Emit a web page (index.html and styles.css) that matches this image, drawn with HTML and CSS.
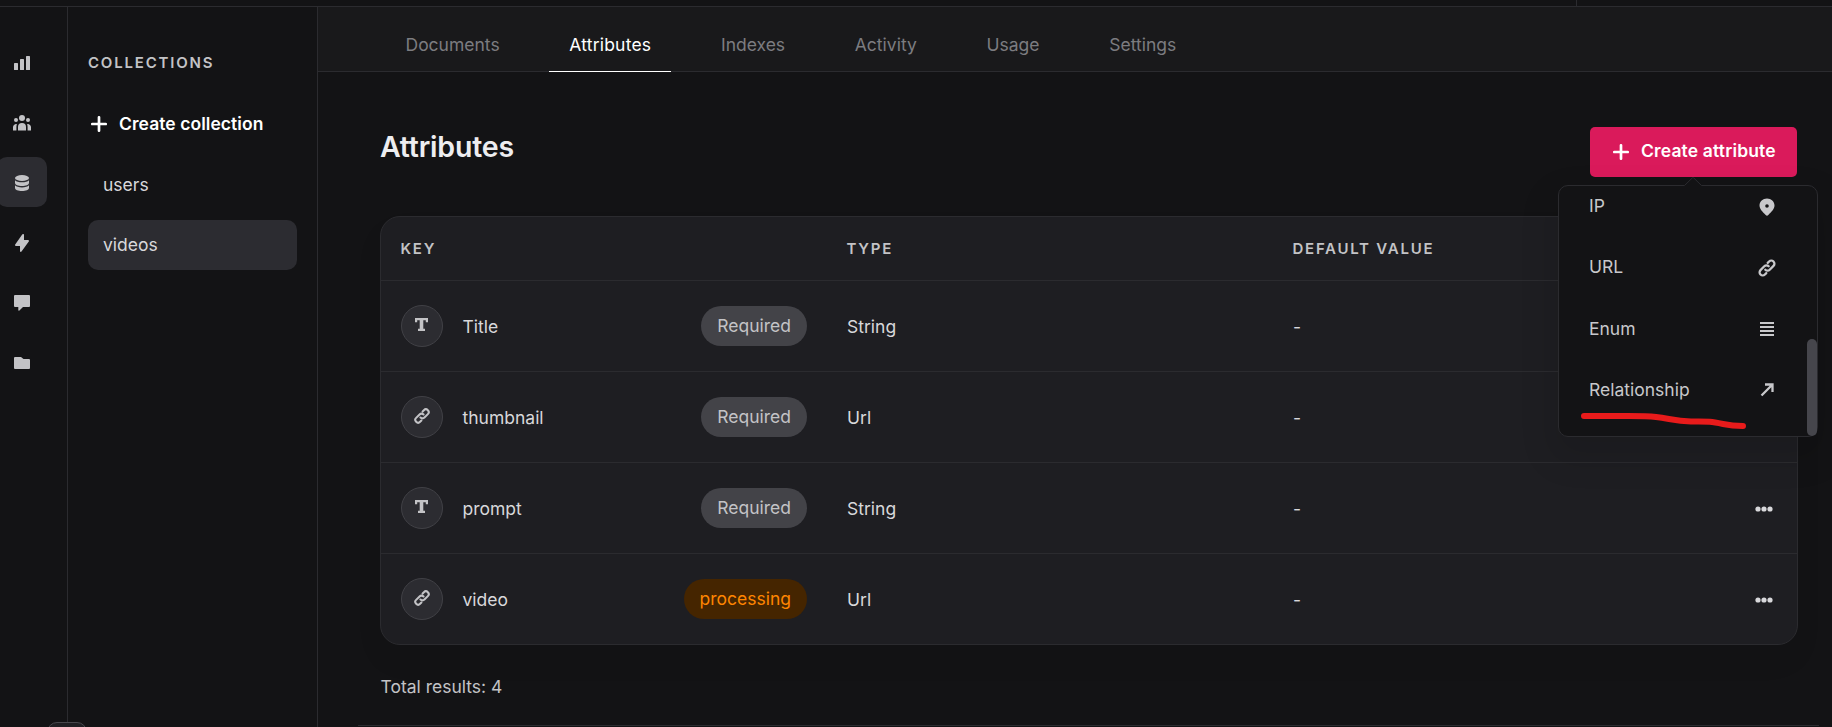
FILE: index.html
```html
<!DOCTYPE html>
<html lang="en">
<head>
<meta charset="utf-8">
<title>Attributes</title>
<link rel="stylesheet" href="styles.css">
</head>
<body>
<svg class="defs" width="0" height="0" aria-hidden="true">
  <symbol id="link" viewBox="0 0 20 20">
    <path d="M8.3 11.7a3.1 3.1 0 0 0 4.4 0l3.8-3.8a3.1 3.1 0 0 0-4.4-4.4l-1.4 1.4M11.7 8.300a3.1 3.1 0 0 0-4.4 0l-3.800 3.800a3.1 3.1 0 0 0 4.400 4.400l1.400-1.400" fill="none" stroke="currentColor" stroke-width="2.3" stroke-linecap="round"/>
  </symbol>
  <symbol id="serif-t" viewBox="0 0 13 13">
    <path d="M0 0h13v4.200h-2.200V2.300H8.300v8.400H10V13H3v-2.300h1.700V2.300H2.200v1.900H0z" fill="currentColor"/>
  </symbol>
  <symbol id="plus" viewBox="0 0 16 16">
    <path d="M8 1.300v13.400M1.300 8h13.400" stroke="currentColor" stroke-width="2.700" stroke-linecap="round"/>
  </symbol>
  <symbol id="dots" viewBox="0 0 18 6">
    <g fill="currentColor"><circle cx="3" cy="3" r="2.600"/><circle cx="9" cy="3" r="2.600"/><circle cx="15" cy="3" r="2.600"/></g>
  </symbol>
</svg>

<header class="topbar"><div class="topbar-end"></div></header>
<div class="app">
  <nav class="rail">
    <a class="rail-item"><svg width="18" height="16" viewBox="0 0 18 16"><g fill="currentColor"><rect x="1" y="8" width="4" height="7" rx=".6"/><rect x="7" y="4" width="4" height="11" rx=".6"/><rect x="13" y="1" width="4" height="14" rx=".6"/></g></svg></a>
    <a class="rail-item"><svg width="18" height="16" viewBox="0 0 18 16"><g fill="currentColor"><circle cx="9" cy="3" r="3"/><circle cx="3" cy="5" r="2"/><circle cx="15" cy="5" r="2"/><path d="M5 15.500V12a4 4 0 0 1 8 0v3.500zM0 15.500V12a3 3 0 0 1 4-2.700 6 6 0 0 0-.6 2.700v3.500zM18 15.500V12a3 3 0 0 0-4-2.700 6 6 0 0 1 .6 2.700v3.500z"/></g></svg></a>
    <a class="rail-item active"><svg width="16" height="18" viewBox="0 0 16 18"><g fill="currentColor"><ellipse cx="8" cy="4" rx="7" ry="3"/><path d="M1 6.200c1.200 1.300 3.900 2.100 7 2.100s5.800-.8 7-2.100V9c0 1.700-3.100 3-7 3s-7-1.300-7-3z"/><path d="M1 11.300c1.200 1.300 3.900 2.100 7 2.100s5.800-.8 7-2.100V14c0 1.700-3.100 3-7 3s-7-1.300-7-3z"/></g></svg></a>
    <a class="rail-item"><svg width="16" height="20" viewBox="0 0 16 20"><path d="M9 1c.7 0 1 .4 1 1v5h4c.9 0 1.300.8.8 1.500l-7.300 10c-.6.800-1.500.4-1.500-.5v-5H2c-.9 0-1.300-.8-.8-1.500l7-10c.2-.3.500-.5.8-.5z" fill="currentColor"/></svg></a>
    <a class="rail-item"><svg width="18" height="18" viewBox="0 0 18 18"><path d="M2 1h14a1 1 0 0 1 1 1v10a1 1 0 0 1-1 1h-6l-3.600 3.500c-.5.500-1.100.3-1.100-.4V13H2a1 1 0 0 1-1-1V2a1 1 0 0 1 1-1z" fill="currentColor"/></svg></a>
    <a class="rail-item"><svg width="18" height="14" viewBox="0 0 18 14"><path d="M2 1h6l2.500 2H16a1 1 0 0 1 1 1v8a1 1 0 0 1-1 1H2a1 1 0 0 1-1-1V2a1 1 0 0 1 1-1z" fill="currentColor"/></svg></a>
    <div class="rail-toggle"></div>
  </nav>
  <aside class="side">
    <h2 class="side-title">COLLECTIONS</h2>
    <a class="create"><svg width="16" height="16"><use href="#plus"/></svg>Create collection</a>
    <a class="side-item">users</a>
    <a class="side-item active">videos</a>
  </aside>
  <main class="main">
    <nav class="tabs">
      <a class="tab">Documents</a><a class="tab active">Attributes</a><a class="tab">Indexes</a><a class="tab">Activity</a><a class="tab">Usage</a><a class="tab">Settings</a>
    </nav>
    <div class="content">
      <div class="heading">
        <h1 class="title">Attributes</h1>
        <div class="action">
          <button class="button"><svg width="16" height="16"><use href="#plus"/></svg><span>Create attribute</span></button>
          <div class="menu">
            <svg class="menu-arrow" width="18" height="10" viewBox="0 0 18 10"><path d="M0 9 8 1q1-1 2 0l8 8v1H0z" fill="#131315"/><path d="M.5 8.500 8.300.9q.7-.6 1.400 0l7.800 7.600" fill="none" stroke="#2b2b2f"/></svg>
            <div class="menu-item">IP<span class="icon low"><svg width="18" height="18" viewBox="0 0 18 18"><path fill-rule="evenodd" d="M9 .5c4.200 0 7.500 3 7.500 7.100 0 3.500-3.200 6.500-6.200 9.500-.8.800-1.800.8-2.600 0-3-3-6.200-6-6.200-9.500C1.500 3.500 4.800.5 9 .5zM9 6.200a1.800 1.800 0 1 0 0 3.600 1.800 1.800 0 0 0 0-3.600z" fill="currentColor"/></svg></span></div>
            <div class="menu-item">URL<span class="icon low"><svg width="20" height="20"><use href="#link"/></svg></span></div>
            <div class="menu-item">Enum<span class="icon"><svg width="16" height="16" viewBox="0 0 16 16"><path d="M1 2h14M1 6h14M1 10h14M1 14h14" stroke="currentColor" stroke-width="2"/></svg></span></div>
            <div class="menu-item">Relationship<span class="icon"><svg width="16" height="16" viewBox="0 0 16 16"><path d="M2.500 13.500 13 3M6 2.500h7.500V10" fill="none" stroke="currentColor" stroke-width="2.300"/></svg></span></div>
            <div class="scroll-thumb"></div>
            <svg class="marker" width="172" height="24" viewBox="0 0 172 24"><path d="M6 7H50C62 7 70 7 78 8c15 2 20 4 35 4.500 17-.5 22 .5 32 2.500 7 1.500 12 2 20 2" fill="none" stroke="#e81b1b" stroke-width="6" stroke-linecap="round"/></svg>
          </div>
        </div>
      </div>
      <div class="table">
        <div class="row head"><span>KEY</span><span>TYPE</span><span>DEFAULT VALUE</span></div>
        <div class="row"><div class="key"><i class="avatar"><svg width="13" height="13"><use href="#serif-t"/></svg></i><span>Title</span><b class="tag">Required</b></div><span>String</span><span>-</span></div>
        <div class="row"><div class="key"><i class="avatar"><svg width="18" height="18"><use href="#link"/></svg></i><span>thumbnail</span><b class="tag">Required</b></div><span>Url</span><span>-</span></div>
        <div class="row"><div class="key"><i class="avatar"><svg width="13" height="13"><use href="#serif-t"/></svg></i><span>prompt</span><b class="tag">Required</b></div><span>String</span><span>-</span><svg class="more" width="18" height="6"><use href="#dots"/></svg></div>
        <div class="row"><div class="key"><i class="avatar"><svg width="18" height="18"><use href="#link"/></svg></i><span>video</span><b class="tag warn">processing</b></div><span>Url</span><span>-</span><svg class="more" width="18" height="6"><use href="#dots"/></svg></div>
      </div>
      <p class="total">Total results: 4</p>
    </div>
    <div class="footer-line"></div>
  </main>
</div>
</body>
</html>
```
FILE: styles.css
```css
* { box-sizing: border-box; }
body {
  margin: 0;
  width: 1832px;
  height: 727px;
  overflow: hidden;
  background: #131315;
  color: #d8d8db;
  font: 17.5px/26px Inter, sans-serif;
}
.defs { position: absolute; }
svg { display: block; flex: none; }
.topbar { height: 7px; border-bottom: 1px solid #2b2b2f; display: flex; justify-content: flex-end; }
.topbar-end { width: 256px; border-left: 1px solid #2b2b2f; }
.app { display: flex; height: 720px; }

.rail { position: relative; width: 68px; flex: none; border-right: 1px solid #2b2b2f; padding-top: 30px; display: flex; flex-direction: column; gap: 10px; }
.rail-item { width: 50px; height: 50px; margin-left: -3px; padding-top: 2px; border-radius: 10px; display: flex; align-items: center; justify-content: center; color: #c3c3c6; }
.rail-item.active { background: #2c2c31; }
.rail-toggle { position: absolute; left: 47px; top: 715px; width: 40px; height: 24px; border: 1px solid #47474c; border-radius: 10px; background: #1f1f23; z-index: 1; }

.side { width: 250px; flex: none; border-right: 1px solid #2b2b2f; padding: 43px 20px 0; }
.side-title { margin: 0; font-size: 15px; line-height: 26px; font-weight: 600; letter-spacing: 1.8px; color: #c3c3c6; }
.create { display: flex; align-items: center; gap: 12px; height: 50px; margin-top: 23px; padding-left: 3px; color: #fff; font-weight: 600; letter-spacing: .06px; white-space: nowrap; }
.side-item { display: flex; align-items: center; height: 50px; margin-top: 10px; padding-left: 15px; border-radius: 10px; }
.create + .side-item { margin-top: 11px; }
.side-item.active { background: #2c2c31; }

.main { flex: 1; display: flex; flex-direction: column; }
.tabs { height: 65px; background: #19191b; border-bottom: 1px solid #2b2b2f; padding-left: 67.5px; display: flex; gap: 29.700px; }
.tab { height: 65px; padding: 25px 20px 0; color: #7c7c80; }
.tab.active { color: #fff; border-bottom: 1px solid #fff; letter-spacing: .2px; }
.content { padding: 55px 34px 0 62px; height: 653px; }
.heading { display: flex; justify-content: space-between; height: 89px; }
.title { margin: 2px 0 0; font-size: 28.500px; line-height: 36px; font-weight: 600; letter-spacing: -.2px; color: #ededf0; }
.action { position: relative; height: 50px; }
.button { display: flex; align-items: center; gap: 12px; width: 207px; height: 50px; padding: 0 0 0 23px; margin: 0 1px 0 0; border: 0; border-radius: 5px; background: #da1a5b; color: #fff; font: 600 17.500px/26px Inter, sans-serif; letter-spacing: .15px; white-space: nowrap; }
.button span { padding-bottom: 2px; }

.menu { position: absolute; z-index: 2; top: 58px; right: -20px; width: 260px; height: 252px; border: 1px solid #2b2b2f; border-radius: 10px; background: #131315; box-shadow: 0 16px 32px 8px rgba(0, 0, 0, .1); padding-top: 6px; }
.menu-arrow { position: absolute; left: 125px; top: -9px; }
.menu-item { display: flex; align-items: center; justify-content: space-between; height: 30px; margin-bottom: 31.400px; padding: 0 39px 0 30px; color: #c8c8cb; }
.menu-item:first-of-type { margin-top: -1px; }
.icon { width: 22px; display: flex; justify-content: center; }
.icon.low { padding-top: 2px; }
.scroll-thumb { position: absolute; right: 0; bottom: 0; width: 10px; height: 97px; border-radius: 5px; background: #46464c; }
.marker { position: absolute; left: 19px; top: 222.500px; }

.table { width: 1418px; height: 429px; border: 1px solid #2b2b2f; border-radius: 20px; background: #1e1e22; box-shadow: 0 16px 32px rgba(0, 0, 0, .04); }
.row { display: grid; grid-template-columns: 446px 446px 1fr auto; align-items: center; height: 91px; padding: 0 24px 0 20px; border-bottom: 1px solid #2b2b2f; }
.row span { padding-top: 2px; }
.row:last-child { height: 90px; border-bottom: 0; }
.head { height: 64px; font-size: 15px; font-weight: 600; letter-spacing: 1.750px; color: #c3c3c6; }
.row.head span { padding-top: 0; margin-left: -.5px; }
.key { display: flex; align-items: center; padding-right: 40px; }
.avatar { width: 42px; height: 42px; margin-right: 19.500px; border: 1px solid #414146; border-radius: 50%; background: #2c2c31; color: #c3c3c6; display: flex; align-items: center; justify-content: center; padding: 0 1px 3px 0; }
.tag { margin-left: auto; height: 40px; padding: 0 16px; border-radius: 20px; background: #434348; color: #c3c3c6; line-height: 39px; font-weight: 400; }
.tag.warn { background: #452500; color: #ff8500; }
.more { color: #d8d8db; position: relative; top: 1px; }
.total { margin: 29px 0 0 .5px; color: #c3c3c6; }
.footer-line { height: 1px; margin: 0 13px 0 40px; background: #2b2b2f; }
```
